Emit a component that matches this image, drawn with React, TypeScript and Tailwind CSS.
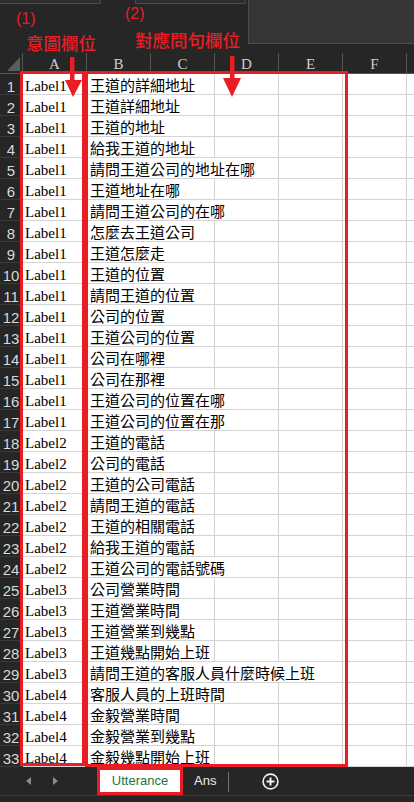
const rows: [string, string][] = [
  ["Label1", "王道的詳細地址"],
  ["Label1", "王道詳細地址"],
  ["Label1", "王道的地址"],
  ["Label1", "給我王道的地址"],
  ["Label1", "請問王道公司的地址在哪"],
  ["Label1", "王道地址在哪"],
  ["Label1", "請問王道公司的在哪"],
  ["Label1", "怎麼去王道公司"],
  ["Label1", "王道怎麼走"],
  ["Label1", "王道的位置"],
  ["Label1", "請問王道的位置"],
  ["Label1", "公司的位置"],
  ["Label1", "王道公司的位置"],
  ["Label1", "公司在哪裡"],
  ["Label1", "公司在那裡"],
  ["Label1", "王道公司的位置在哪"],
  ["Label1", "王道公司的位置在那"],
  ["Label2", "王道的電話"],
  ["Label2", "公司的電話"],
  ["Label2", "王道的公司電話"],
  ["Label2", "請問王道的電話"],
  ["Label2", "王道的相關電話"],
  ["Label2", "給我王道的電話"],
  ["Label2", "王道公司的電話號碼"],
  ["Label3", "公司營業時間"],
  ["Label3", "王道營業時間"],
  ["Label3", "王道營業到幾點"],
  ["Label3", "王道幾點開始上班"],
  ["Label3", "請問王道的客服人員什麼時候上班"],
  ["Label4", "客服人員的上班時間"],
  ["Label4", "金毅營業時間"],
  ["Label4", "金毅營業到幾點"],
  ["Label4", "金毅幾點開始上班"],
];

// the 7th column only peeks in at the right edge, so it has no letter
const columns = ["A", "B", "C", "D", "E", "F", ""];

const spanClass: Record<number, string> = {
  1: "col-span-1",
  2: "col-span-2",
  3: "col-span-3",
  4: "col-span-4",
  5: "col-span-5",
  6: "col-span-6",
};

// Excel lets text spill over empty neighbours, so the gridlines under it vanish
function spanOf(text: string) {
  return Math.min(6, Math.ceil((text.length * 15 + 4) / 64));
}

const red = "#ea1d25";

function SheetRow({ n, label, text }: { n: number; label: string; text: string }) {
  const span = spanOf(text);
  const empties = Array.from({ length: 6 - span });
  return (
    <>
      <div className="h-[21px] border-b border-r border-[#3a3a3a] bg-[#262626] text-center font-['Liberation_Sans',sans-serif] text-[15px] leading-[25px] text-[#d9d9d9]">
        {n}
      </div>
      <div className="h-[21px] overflow-hidden whitespace-nowrap border-b border-r border-[#d4d4d4] bg-white pl-[2px] font-['Liberation_Serif',serif] text-[15px] leading-[25px] text-black">
        {label}
      </div>
      <div
        className={`${spanClass[span]} h-[21px] whitespace-nowrap border-b border-r border-[#d4d4d4] bg-white pl-[3px] font-['Noto_Sans_CJK_TC',sans-serif] text-[15px] leading-[22px] text-black`}
      >
        {text}
      </div>
      {empties.map((_, i) => (
        <div key={i} className="h-[21px] border-b border-r border-[#d4d4d4] bg-white" />
      ))}
    </>
  );
}

export default function App() {
  return (
    <div className="relative h-[802px] w-[414px] overflow-hidden bg-[#262626]">
      {/* ribbon remnants */}
      <div className="flex h-[53px] items-start">
        <div className="h-[4px] w-[101px] border-b border-r border-[#4a4a4a] bg-[#2e2e2e]" />
        <div className="ml-[34px] h-[4px] w-[111px] border-b border-l border-r border-[#4a4a4a] bg-[#2e2e2e]" />
        <div className="ml-[2px] h-[44px] flex-1 border-b border-l border-[#4e4e4e] bg-[#363636]" />
      </div>

      {/* sheet */}
      <div className="grid w-[471px] grid-cols-[23px_repeat(7,64px)]">
        <div className="relative h-[21px] border-b border-r border-[#555555]">
          <svg className="absolute left-0 top-0" width="23" height="20" viewBox="0 0 23 20">
            <polygon points="7,18 20,18 20,4" fill="#5c5c5c" />
          </svg>
        </div>
        {columns.map((c, i) => (
          <div
            key={i}
            className="h-[21px] border-b border-r border-[#555555] text-center font-['Liberation_Serif',serif] text-[15px] leading-[22px] text-[#cfcfcf]"
          >
            {c}
          </div>
        ))}
        {rows.map(([label, text], i) => (
          <SheetRow key={i} n={i + 1} label={label} text={text} />
        ))}
      </div>

      {/* sheet tabs */}
      <div className="flex h-[29px] items-start border-b border-[#3d3d3d] font-['Liberation_Sans',sans-serif]">
        <div className="flex h-[28px] w-[97px] items-center pl-[26px]">
          <svg width="6" height="8" viewBox="0 0 6 8">
            <polygon points="5,0 5,8 0,4" fill="#8a8a8a" />
          </svg>
          <svg className="ml-[21px]" width="6" height="8" viewBox="0 0 6 8">
            <polygon points="0,0 0,8 5,4" fill="#8a8a8a" />
          </svg>
        </div>
        <div
          className="flex h-[28px] w-[86px] items-center justify-center border-[3px] bg-white text-[13px] text-[#1e7346]"
          style={{ borderColor: red }}
        >
          Utterance
        </div>
        <div className="ml-[11px] flex h-[28px] items-center text-[13px] text-[#eeeeee]">Ans</div>
        <div className="ml-[12px] mt-[5px] h-[20px] w-px bg-[#707070]" />
        <div className="ml-[33px] flex h-[28px] items-center">
          <svg width="17" height="17" viewBox="0 0 17 17">
            <circle cx="8.5" cy="8.5" r="7.4" fill="none" stroke="#f2f2f2" strokeWidth="1.6" />
            <path d="M8.5 4.5v8M4.5 8.5h8" stroke="#f2f2f2" strokeWidth="2" />
          </svg>
        </div>
      </div>

      {/* annotations */}
      <div
        className="absolute left-[16px] top-[11px] font-['Liberation_Sans',sans-serif] text-[16px] leading-none"
        style={{ color: red }}
      >
        (1)
      </div>
      <div
        className="absolute left-[26px] top-[34px] font-['Noto_Sans_CJK_TC',sans-serif] text-[17.5px] font-medium leading-none"
        style={{ color: red }}
      >
        意圖欄位
      </div>
      <div
        className="absolute left-[125px] top-[6px] font-['Liberation_Sans',sans-serif] text-[16px] leading-none"
        style={{ color: red }}
      >
        (2)
      </div>
      <div
        className="absolute left-[135px] top-[31px] font-['Noto_Sans_CJK_TC',sans-serif] text-[17.5px] font-medium leading-none"
        style={{ color: red }}
      >
        對應問句欄位
      </div>

      <div
        className="absolute left-[20px] top-[71px] h-[695px] w-[65px] border-[3px]"
        style={{ borderColor: red }}
      />
      <div
        className="absolute left-[85px] top-[71px] h-[696px] w-[263px] border-[3px]"
        style={{ borderColor: red }}
      />

      <svg className="pointer-events-none absolute left-0 top-0" width="414" height="110" viewBox="0 0 414 110">
        <rect x="70" y="57" width="4.5" height="25" fill={red} />
        <polygon points="65,80 82,80 73,97" fill={red} />
        <rect x="230" y="56" width="4.5" height="24" fill={red} />
        <polygon points="223,78 241,78 232,97" fill={red} />
      </svg>
    </div>
  );
}
